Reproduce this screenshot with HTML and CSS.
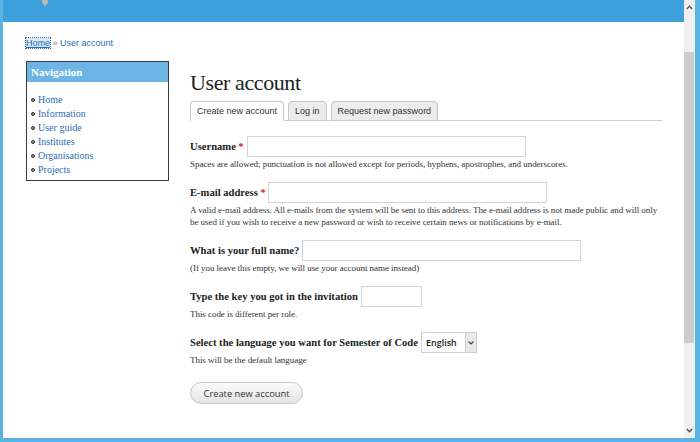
FILE: index.html
```html
<!DOCTYPE html>
<html>
<head>
<meta charset="utf-8">
<title>User account</title>
<link rel="stylesheet" href="styles.css">
</head>
<body>
<div class="window">
  <div class="viewport">
    <header class="topbar">
      <svg class="logo-tip" width="8" height="8" viewBox="0 0 8 8"><path d="M1 0 H7 V2 Q7 4 4.6 5 L4 8 L3.4 5 Q1 4 1 2 Z" fill="#b9b9b9"/></svg>
    </header>
    <div class="page">
      <nav class="breadcrumb"><a class="crumb-focus" href="#">Home</a> <span class="sep">»</span> <a class="crumb" href="#">User account</a></nav>
      <div class="layout">
        <aside class="block">
          <h2 class="block-title">Navigation</h2>
          <ul class="menu">
            <li><a href="#">Home</a></li>
            <li><a href="#">Information</a></li>
            <li><a href="#">User guide</a></li>
            <li><a href="#">Institutes</a></li>
            <li><a href="#">Organisations</a></li>
            <li><a href="#">Projects</a></li>
          </ul>
        </aside>
        <main class="content">
          <h1 class="title">User account</h1>
          <ul class="tabs">
            <li class="tab active"><a href="#">Create new account</a></li>
            <li class="tab"><a href="#">Log in</a></li>
            <li class="tab"><a href="#">Request new password</a></li>
          </ul>
          <form class="form">
            <div class="item">
              <div class="row"><label>Username <span class="req">*</span></label><span class="input w-long"></span></div>
              <div class="desc">Spaces are allowed; punctuation is not allowed except for periods, hyphens, apostrophes, and underscores.</div>
            </div>
            <div class="item">
              <div class="row"><label>E-mail address <span class="req">*</span></label><span class="input w-long"></span></div>
              <div class="desc">A valid e-mail address. All e-mails from the system will be sent to this address. The e-mail address is not made public and will only be used if you wish to receive a new password or wish to receive certain news or notifications by e-mail.</div>
            </div>
            <div class="item">
              <div class="row"><label>What is your full name?</label><span class="input w-long"></span></div>
              <div class="desc">(If you leave this empty, we will use your account name instead)</div>
            </div>
            <div class="item">
              <div class="row"><label>Type the key you got in the invitation</label><span class="input w-short"></span></div>
              <div class="desc">This code is different per role.</div>
            </div>
            <div class="item">
              <div class="row"><label>Select the language you want for Semester of Code</label>
                <span class="select"><span class="select-value">English</span><span class="select-arrow"><svg width="6" height="4" viewBox="0 0 6 4"><path d="M0.5 0.5 L3 3 L5.5 0.5" fill="none" stroke="#444" stroke-width="1.1"/></svg></span></span>
              </div>
              <div class="desc">This will be the default language</div>
            </div>
            <button class="btn" type="button">Create new account</button>
          </form>
        </main>
      </div>
    </div>
  </div>
  <div class="scrollbar">
    <div class="sb-arrow"><svg width="7" height="5" viewBox="0 0 7 5"><path d="M0.8 4 L3.5 1.2 L6.2 4" fill="none" stroke="#555" stroke-width="1.3"/></svg></div>
    <div class="sb-thumb"></div>
    <div class="sb-spacer"></div>
    <div class="sb-arrow"><svg width="7" height="5" viewBox="0 0 7 5"><path d="M0.8 1 L3.5 3.8 L6.2 1" fill="none" stroke="#555" stroke-width="1.3"/></svg></div>
  </div>
</div>
</body>
</html>
```

FILE: styles.css
```css
html, body {
  margin: 0;
  padding: 0;
  background: #5ab3e3;
}
.window {
  width: 700px;
  height: 442px;
  box-sizing: border-box;
  border-left: 3px solid #5ab3e3;
  border-right: 5px solid #5ab3e3;
  border-bottom: 4px solid #5ab3e3;
  display: flex;
  overflow: hidden;
}
.viewport {
  flex: 1;
  background: #fff;
  display: flex;
  flex-direction: column;
  overflow: hidden;
}
.topbar {
  height: 22px;
  flex: none;
  background: #3e9fdd;
  padding-left: 38px;
}
.logo-tip {
  display: block;
}
.page {
  padding: 15px 22px 0 23px;
}
.breadcrumb {
  font-family: "Liberation Sans", Arial, sans-serif;
  font-size: 9px;
  line-height: 12px;
  height: 12px;
  color: #666;
}
.breadcrumb a {
  color: #2a6db4;
  text-decoration: none;
}
.crumb-focus {
  background: #d7e9f8;
  outline: 1px dotted #2a6db4;
  text-decoration: underline !important;
}
.sep {
  color: #777;
}
.layout {
  display: flex;
  align-items: flex-start;
  margin-top: 12px;
}
.block {
  width: 143px;
  box-sizing: border-box;
  border: 1px solid #3a3a3a;
  flex: none;
}
.block-title {
  margin: 0;
  height: 20px;
  line-height: 20px;
  background: #6db5e7;
  color: #fff;
  font-family: "Liberation Serif", "Times New Roman", serif;
  font-weight: bold;
  font-size: 11px;
  padding-left: 4px;
}
.menu {
  list-style: none;
  margin: 0;
  padding: 11px 0 3px 0;
}
.menu li {
  position: relative;
  padding-left: 11px;
  line-height: 14px;
  font-family: "Liberation Serif", "Times New Roman", serif;
  font-size: 10px;
}
.menu li::before {
  content: "";
  position: absolute;
  left: 4px;
  top: 5px;
  width: 2px;
  height: 2px;
  border: 1.3px solid #333;
  border-radius: 50%;
  background: #999;
}
.menu a {
  color: #2a6db4;
  text-decoration: none;
}
.content {
  flex: 1;
  margin-left: 21px;
}
.title {
  margin: 9px 0 5px 0;
  font-family: "Liberation Serif", "Times New Roman", serif;
  font-weight: normal;
  font-size: 22px;
  letter-spacing: -0.4px;
  line-height: 26px;
  color: #222;
}
.tabs {
  list-style: none;
  margin: 0;
  padding: 0;
  display: flex;
  gap: 4px;
  border-bottom: 1px solid #cfcfcf;
  height: 19px;
}
.tab {
  height: 18px;
  border: 1px solid #c6c6c6;
  border-radius: 4px 4px 0 0;
  background: #ececec;
  margin-bottom: -1px;
}
.tab.active {
  background: #fff;
  border-bottom-color: #fff;
}
.tab a {
  display: block;
  padding: 0 6px;
  line-height: 18px;
  font-family: "Liberation Sans", Arial, sans-serif;
  font-size: 9px;
  color: #333;
  text-decoration: none;
}
.form {
  margin-top: 15px;
}
.item {
  margin-bottom: 12px;
}
.row {
  display: flex;
  align-items: center;
  height: 21px;
}
.row label {
  font-family: "Liberation Serif", "Times New Roman", serif;
  font-weight: bold;
  font-size: 10.6px;
  color: #222;
  margin-right: 3px;
}
.req {
  color: #d00;
  font-size: 10px;
}
.input {
  display: block;
  height: 21px;
  box-sizing: border-box;
  border: 1px solid #d4d4d4;
  background: #fff;
}
.w-long {
  width: 279px;
}
.w-short {
  width: 61px;
}
.desc {
  margin-top: 1px;
  font-family: "Liberation Serif", "Times New Roman", serif;
  font-size: 9px;
  letter-spacing: -0.05px;
  line-height: 12px;
  color: #333;
}
.select {
  display: flex;
  height: 21px;
  box-sizing: border-box;
  border: 1px solid #cfcfcf;
  background: #fff;
}
.select-value {
  font-family: "Open Sans", sans-serif;
  font-weight: 600;
  font-size: 9px;
  line-height: 19px;
  color: #222;
  padding: 0 8px 0 4px;
}
.select-arrow {
  width: 10px;
  background: #e8e8e8;
  border-left: 1px solid #cfcfcf;
  display: flex;
  align-items: center;
  justify-content: center;
}
.select-arrow svg {
  display: block;
}
.btn {
  display: block;
  margin-top: 16px;
  width: 113px;
  height: 22px;
  padding: 0;
  border: 1px solid #c9c9c9;
  border-radius: 11px;
  background: linear-gradient(#fbfbfb, #e3e3e3);
  font-family: "Open Sans", sans-serif;
  font-size: 9.3px;
  color: #333;
}
.scrollbar {
  width: 11px;
  flex: none;
  background: #f0f0f0;
  display: flex;
  flex-direction: column;
}
.sb-arrow {
  height: 15px;
  display: flex;
  align-items: center;
  justify-content: center;
}
.sb-arrow svg {
  display: block;
}
.sb-thumb {
  margin-top: 37px;
  height: 291px;
  width: 10px;
  background: #cdcdcd;
}
.sb-spacer {
  flex: 1;
}
```
